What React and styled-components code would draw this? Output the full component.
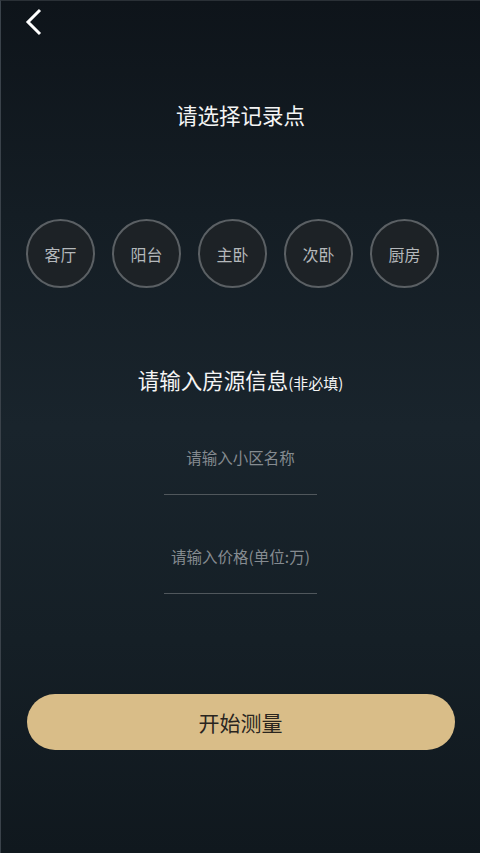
import React, {useState} from "react";
import styled, {createGlobalStyle} from "styled-components";

const GlobalStyle = createGlobalStyle`
  html, body {
    margin: 0;
    padding: 0;
    background: #111a21;
  }
  * {
    box-sizing: border-box;
  }
`;

const Page = styled.div`
  width: 480px;
  min-height: 853px;
  display: flex;
  flex-direction: column;
  align-items: center;
  border-left: 1px solid #3a424a;
  border-top: 1px solid #2a3036;
  background: linear-gradient(180deg, #0e141a 0%, #141d24 25%, #19242c 50%, #151f26 75%, #10181e 100%);
  font-family: "Noto Sans CJK SC", "Noto Sans", sans-serif;
`;

const TopBar = styled.div`
  align-self: stretch;
  padding: 7px 0 0 24px;
  height: 36px;
`;

const BackButton = styled.button`
  width: 18px;
  height: 28px;
  padding: 0;
  border: none;
  background: none;
  cursor: pointer;
  display: block;
`;

const Title = styled.h1`
  margin: ${p => p.$top}px 0 0;
  font-size: 21.5px;
  font-weight: 400;
  line-height: 28px;
  color: #f4f4f4;
`;

const Small = styled.span`
  font-size: 15px;
`;

const Points = styled.div`
  margin-top: 90px;
  align-self: stretch;
  padding-left: 25px;
  display: flex;
  gap: 17px;
`;

const Point = styled.button`
  width: 69px;
  height: 69px;
  border-radius: 50%;
  border: 2px solid ${p => (p.$active ? "#d9bd88" : "#5b6064")};
  background: #1d2226;
  color: ${p => (p.$active ? "#d9bd88" : "#b4b8bb")};
  font-family: inherit;
  font-size: 16px;
  padding: 0;
  cursor: pointer;
`;

const Field = styled.input`
  margin-top: ${p => p.$top}px;
  width: 153px;
  height: 72px;
  border: none;
  border-bottom: 1px solid #50575c;
  background: transparent;
  color: #e0e0e0;
  text-align: center;
  font-family: inherit;
  font-size: 15.5px;
  outline: none;
  padding: 0 0 4px;
  &::placeholder {
    color: #858b90;
  }
`;

const StartButton = styled.button`
  margin-top: 100px;
  width: 428px;
  height: 56px;
  border: none;
  border-radius: 28px;
  background: #d9bd88;
  color: #29251f;
  font-family: inherit;
  font-size: 21px;
  cursor: pointer;
`;

const rooms = ["客厅", "阳台", "主卧", "次卧", "厨房"];

export default function App() {
    const [room, setRoom] = useState(null);

    return (
        <Page>
            <GlobalStyle/>
            <TopBar>
                <BackButton aria-label="返回">
                    <svg width="18" height="28" viewBox="0 0 18 28">
                        <path d="M15 2 L3 14 L15 26" fill="none" stroke="#fff" strokeWidth="3"/>
                    </svg>
                </BackButton>
            </TopBar>

            <Title $top={64}>请选择记录点</Title>

            <Points>
                {rooms.map(r =>
                    <Point key={r} $active={room === r} onClick={() => setRoom(r)}>{r}</Point>
                )}
            </Points>

            <Title $top={78}>请输入房源信息<Small>(非必填)</Small></Title>

            <Field $top={26} placeholder="请输入小区名称"/>
            <Field $top={27} placeholder="请输入价格(单位:万)"/>

            <StartButton>开始测量</StartButton>
        </Page>
    );
}
